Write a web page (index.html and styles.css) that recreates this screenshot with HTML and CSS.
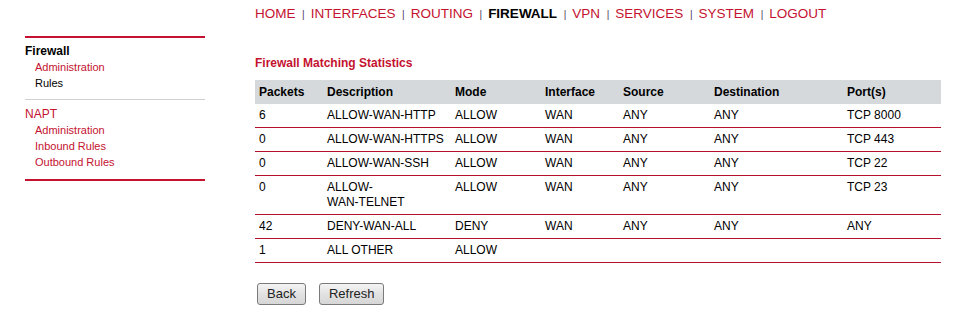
FILE: index.html
```html
<!DOCTYPE html>
<html>
<head>
<meta charset="utf-8">
<title>Firewall Rules</title>
<link rel="stylesheet" href="styles.css">
</head>
<body>
<div class="page">
  <aside class="sidebar">
    <div class="side-group">
      <div class="side-title current">Firewall</div>
      <a class="side-link">Administration</a>
      <a class="side-link current">Rules</a>
    </div>
    <div class="side-group">
      <div class="side-title">NAPT</div>
      <a class="side-link">Administration</a>
      <a class="side-link">Inbound Rules</a>
      <a class="side-link">Outbound Rules</a>
    </div>
  </aside>
  <main class="main">
    <nav class="topnav">
      <a>HOME</a><span class="sep">|</span><a>INTERFACES</a><span class="sep">|</span><a>ROUTING</a><span class="sep">|</span><a class="active">FIREWALL</a><span class="sep">|</span><a>VPN</a><span class="sep">|</span><a>SERVICES</a><span class="sep">|</span><a>SYSTEM</a><span class="sep">|</span><a>LOGOUT</a>
    </nav>
    <h2 class="title">Firewall Matching Statistics</h2>
    <table class="stats">
      <colgroup>
        <col class="c1"><col class="c2"><col class="c3"><col class="c4"><col class="c5"><col class="c6"><col class="c7">
      </colgroup>
      <thead>
        <tr><th>Packets</th><th>Description</th><th>Mode</th><th>Interface</th><th>Source</th><th>Destination</th><th>Port(s)</th></tr>
      </thead>
      <tbody>
        <tr><td>6</td><td>ALLOW-WAN-HTTP</td><td>ALLOW</td><td>WAN</td><td>ANY</td><td>ANY</td><td>TCP 8000</td></tr>
        <tr><td>0</td><td>ALLOW-WAN-HTTPS</td><td>ALLOW</td><td>WAN</td><td>ANY</td><td>ANY</td><td>TCP 443</td></tr>
        <tr><td>0</td><td>ALLOW-WAN-SSH</td><td>ALLOW</td><td>WAN</td><td>ANY</td><td>ANY</td><td>TCP 22</td></tr>
        <tr><td>0</td><td>ALLOW-<span class="nowrap">WAN-TELNET</span></td><td>ALLOW</td><td>WAN</td><td>ANY</td><td>ANY</td><td>TCP 23</td></tr>
        <tr><td>42</td><td>DENY-WAN-ALL</td><td>DENY</td><td>WAN</td><td>ANY</td><td>ANY</td><td>ANY</td></tr>
        <tr><td>1</td><td>ALL OTHER</td><td>ALLOW</td><td></td><td></td><td></td><td></td></tr>
      </tbody>
    </table>
    <div class="buttons">
      <button class="btn">Back</button>
      <button class="btn">Refresh</button>
    </div>
  </main>
</div>
</body>
</html>
```

FILE: styles.css
```css
html, body {
  margin: 0;
  padding: 0;
  background: #fff;
}
body {
  font-family: "Liberation Sans", Arial, sans-serif;
  color: #000;
}
.page {
  display: flex;
  align-items: flex-start;
  gap: 50px;
  padding-left: 25px;
}
.sidebar {
  width: 180px;
  margin-top: 36px;
  border-top: 2px solid #c41230;
  border-bottom: 2px solid #c41230;
}
.side-group {
  display: flex;
  flex-direction: column;
  padding: 5px 0 8px;
}
.side-group + .side-group {
  border-top: 1px solid #d0d0d0;
  padding: 6px 0 9px;
}
.side-title {
  font-size: 12px;
  line-height: 16px;
  color: #c41230;
}
.side-title.current {
  color: #000;
  font-weight: bold;
}
.side-link {
  font-size: 11px;
  line-height: 16px;
  padding-left: 10px;
  color: #c41230;
}
.side-link.current {
  color: #000;
}
.main {
  width: 686px;
  display: flex;
  flex-direction: column;
}
.topnav {
  font-size: 13.5px;
  line-height: 16px;
  height: 16px;
  padding-top: 6px;
  white-space: nowrap;
  color: #c41230;
}
.topnav a {
  color: #c41230;
}
.topnav a.active {
  color: #000;
  font-weight: bold;
}
.topnav .sep {
  font-size: 10px;
  line-height: 10px;
  color: #4a3a5a;
  margin: 0 6px 0 6.6px;
}
.title {
  margin: 33px 0 9px;
  font-size: 12px;
  line-height: 16px;
  font-weight: bold;
  color: #c41230;
}
.stats {
  width: 686px;
  table-layout: fixed;
  border-collapse: collapse;
  font-size: 12px;
  line-height: 15px;
}
.c1 { width: 68px; }
.c2 { width: 128px; }
.c3 { width: 90px; }
.c4 { width: 78px; }
.c5 { width: 91px; }
.c6 { width: 133px; }
.c7 { width: 98px; }
.stats th {
  background: #d5d9dc;
  text-align: left;
  font-weight: bold;
  padding: 5px 4px 4px;
  vertical-align: top;
}
.stats td {
  padding: 4px 4px;
  vertical-align: top;
  border-bottom: 1px solid #b5102c;
}
.nowrap {
  white-space: nowrap;
}
.buttons {
  display: flex;
  gap: 13px;
  padding: 20px 0 0 2px;
}
.btn {
  font-family: "Liberation Sans", Arial, sans-serif;
  font-size: 13px;
  line-height: 15px;
  color: #222;
  padding: 2px 9px 3px;
  border: 1px solid #7a7a7a;
  border-radius: 3px;
  background: linear-gradient(#f4f4f4, #e2e2e2 50%, #d6d6d6);
}
```
